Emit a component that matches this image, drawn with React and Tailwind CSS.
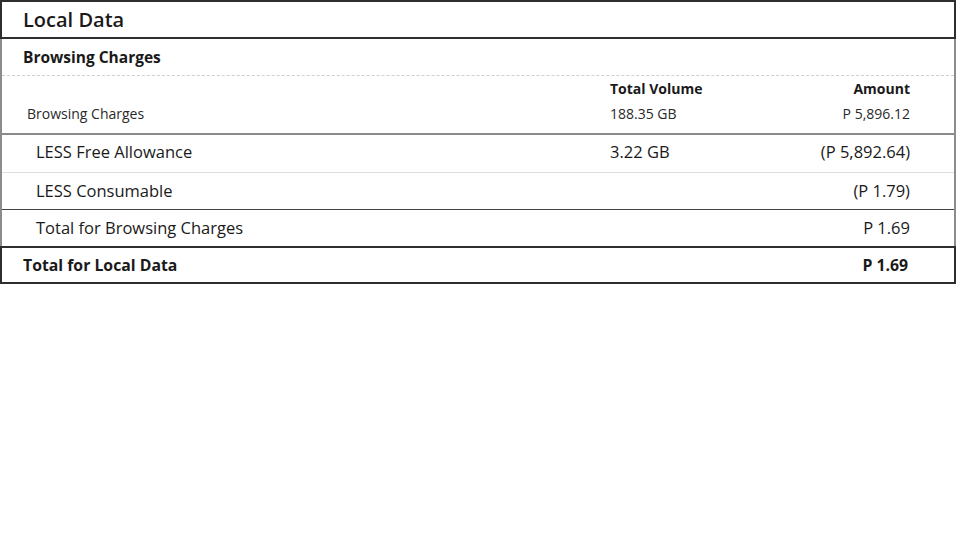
export default function App() {
  const font = { fontFamily: '"Open Sans", "Noto Sans", Arial, sans-serif' };
  return (
    <div className="w-[960px] h-[540px] bg-white text-[#1a1a1a]" style={font}>
      <div className="w-[956px]">
        <div className="h-[39px] border-2 border-[#2e2e2e] flex items-center pl-[21px]">
          <span className="text-[20px] font-semibold leading-none">Local Data</span>
        </div>
        <div className="border-x-2 border-[#8c8c8c]">
          <div className="h-[37px] border-b border-dashed border-[#cfcfcf] flex items-center pt-[2px] pl-[21px]">
            <span className="text-[15.5px] font-bold">Browsing Charges</span>
          </div>
          <div className="h-[59px] border-b-2 border-[#8a8a8a] flex flex-col pt-[3px]">
            <div className="flex items-center h-[18px] text-[14px] font-bold">
              <div className="w-[608px]" />
              <div className="w-[200px]">Total Volume</div>
              <div className="w-[100px] text-right">Amount</div>
            </div>
            <div className="flex items-center h-[32px] text-[14px] text-[#2a2a2a]">
              <div className="w-[608px] pl-[25px]">Browsing Charges</div>
              <div className="w-[200px]">188.35 GB</div>
              <div className="w-[100px] text-right">P 5,896.12</div>
            </div>
          </div>
          <div className="h-[38px] border-b border-[#dedede] flex items-center pb-[3px] text-[16.5px]">
            <div className="w-[608px] pl-[34px]">LESS Free Allowance</div>
            <div className="w-[200px]">3.22 GB</div>
            <div className="w-[100px] text-right">(P 5,892.64)</div>
          </div>
          <div className="h-[37px] border-b border-[#444] flex items-center text-[16.5px]">
            <div className="w-[608px] pl-[34px]">LESS Consumable</div>
            <div className="w-[200px]"></div>
            <div className="w-[100px] text-right">(P 1.79)</div>
          </div>
          <div className="h-[36px] flex items-center text-[16.5px]">
            <div className="w-[608px] pl-[34px]">Total for Browsing Charges</div>
            <div className="w-[200px]"></div>
            <div className="w-[100px] text-right">P 1.69</div>
          </div>
        </div>
        <div className="h-[38px] border-2 border-[#2e2e2e] flex items-center pt-[2px] text-[15.8px] font-bold">
          <div className="w-[606px] pl-[21px]">Total for Local Data</div>
          <div className="w-[200px]"></div>
          <div className="w-[100px] text-right">P 1.69</div>
        </div>
      </div>
    </div>
  );
}
